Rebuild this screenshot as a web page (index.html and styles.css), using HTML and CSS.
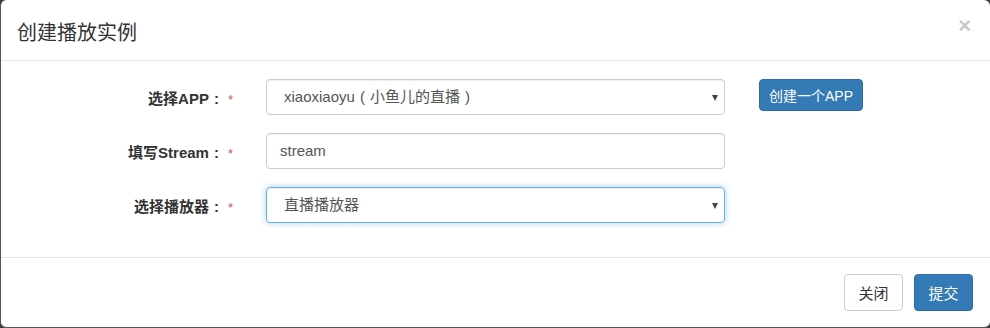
FILE: index.html
```html
<!DOCTYPE html>
<html lang="zh-CN">
<head>
    <meta charset="UTF-8">
    <title>创建播放实例</title>
    <link rel="stylesheet" href="styles.css">
</head>
<body>
    <div class="modal">
        <div class="modal-header">
            <h4 class="modal-title">创建播放实例</h4>
            <span class="close">&times;</span>
        </div>
        <div class="modal-body">
            <div class="form-row">
                <label class="form-label">选择APP<span class="punct">:</span><span class="req">*</span></label>
                <div class="select-wrap">
                    <div class="form-control select">xiaoxiaoyu<span class="punct">(</span>小鱼儿的直播<span class="punct">)</span></div>
                </div>
                <button class="btn btn-primary btn-app">创建一个APP</button>
            </div>
            <div class="form-row">
                <label class="form-label">填写Stream<span class="punct">:</span><span class="req">*</span></label>
                <div class="form-control input">stream</div>
            </div>
            <div class="form-row">
                <label class="form-label">选择播放器<span class="punct">:</span><span class="req">*</span></label>
                <div class="select-wrap">
                    <div class="form-control select focused">直播播放器</div>
                </div>
            </div>
        </div>
        <div class="modal-footer">
            <button class="btn btn-default">关闭</button>
            <button class="btn btn-primary">提交</button>
        </div>
    </div>
</body>
</html>
```

FILE: styles.css
```css
body {
    margin: 0;
    background: #3a3a3a;
    font-family: "Liberation Sans", "Noto Sans CJK SC", Arial, sans-serif;
    color: #333;
}
.punct {
    display: inline-block;
    width: 1em;
    text-align: center;
}
.modal {
    box-sizing: border-box;
    width: 990px;
    height: 328px;
    background: #fff;
    border-left: 1px solid #555;
    border-bottom: 1px solid #555;
    border-radius: 6px;
    display: flex;
    flex-direction: column;
}
.modal-header {
    height: 61px;
    box-sizing: border-box;
    border-bottom: 1px solid #e5e5e5;
    display: flex;
    align-items: center;
    justify-content: space-between;
    padding: 0 19px 0 16px;
}
.modal-title {
    margin: 0;
    font-size: 20px;
    font-weight: normal;
    color: #333;
    padding-top: 2px;
}
.close {
    font-size: 22px;
    font-weight: bold;
    color: #c8c8c8;
    margin-top: -8px;
}
.modal-body {
    padding: 18px 0 0;
    height: 197px;
    box-sizing: border-box;
    border-bottom: 1px solid #e5e5e5;
}
.form-row {
    display: flex;
    align-items: center;
    margin-bottom: 18px;
}
.form-label {
    width: 232px;
    text-align: right;
    font-weight: bold;
    font-size: 15px;
    color: #333;
}
.req {
    color: #d9534f;
    font-weight: normal;
    font-size: 13px;
    margin-left: 4px;
}
.form-control {
    box-sizing: border-box;
    height: 36px;
    width: 459px;
    margin-left: 33px;
    border: 1px solid #ccc;
    border-radius: 4px;
    font-size: 15px;
    color: #555;
    line-height: 34px;
    padding: 0 13px;
    box-shadow: inset 0 1px 1px rgba(0,0,0,0.075);
}
.select-wrap {
    position: relative;
}
.select {
    padding-left: 17px;
}
.select-wrap::after {
    content: "";
    position: absolute;
    right: 7px;
    top: 16px;
    border-left: 3px solid transparent;
    border-right: 3px solid transparent;
    border-top: 6px solid #444;
}
.focused {
    border-color: #66afe9;
    box-shadow: inset 0 1px 1px rgba(0,0,0,0.075), 0 0 6px rgba(102,175,233,0.6);
}
.btn {
    font-family: "Liberation Sans", "Noto Sans CJK SC", Arial, sans-serif;
    font-size: 15px;
    border-radius: 4px;
    border: 1px solid transparent;
    cursor: pointer;
    box-sizing: border-box;
}
.btn-primary {
    background: #337ab7;
    border-color: #2e6da4;
    color: #fff;
}
.btn-default {
    background: #fff;
    border-color: #ccc;
    color: #333;
}
.btn-app {
    margin-left: 34px;
    height: 32px;
    width: 104px;
    padding: 0;
    font-size: 14px;
    align-self: flex-start;
}
.modal-footer {
    flex: 1;
    display: flex;
    justify-content: flex-end;
    align-items: flex-start;
    padding: 16px 17px 0 0;
    gap: 11px;
}
.modal-footer .btn {
    height: 37px;
    width: 59px;
    padding: 0;
}
```
